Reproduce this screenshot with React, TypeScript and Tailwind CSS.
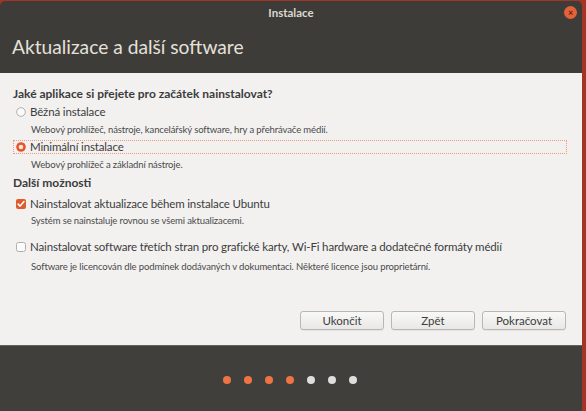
import React from "react";

const font = { fontFamily: 'Lato, "Open Sans", sans-serif' };

function Radio({ checked }: { checked?: boolean }) {
  return (
    <svg width="10" height="10" viewBox="0 0 10 10" className="shrink-0">
      {checked ? (
        <>
          <circle cx="5" cy="5" r="4.8" fill="#e2582b" />
          <circle cx="5" cy="5" r="2.3" fill="#fbe3da" />
        </>
      ) : (
        <circle cx="5" cy="5" r="4.3" fill="#fbfbfb" stroke="#a9a7a3" strokeWidth="0.9" />
      )}
    </svg>
  );
}

function Check({ checked }: { checked?: boolean }) {
  return (
    <svg width="10" height="10" viewBox="0 0 10 10" className="shrink-0">
      {checked ? (
        <>
          <rect x="0" y="0" width="10" height="10" rx="2" fill="#df5a2c" />
          <path d="M2.1 5.1 L4.1 7.1 L8 2.6" fill="none" stroke="#ffffff" strokeWidth="1.5" strokeLinecap="round" strokeLinejoin="round" />
        </>
      ) : (
        <rect x="0.5" y="0.5" width="9" height="9" rx="2" fill="#fbfbfb" stroke="#a9a7a3" strokeWidth="0.9" />
      )}
    </svg>
  );
}

function Button({ label }: { label: string }) {
  return (
    <div className="w-[84px] h-[19px] flex items-center justify-center rounded-[3px] border border-[#b9b7b3] bg-gradient-to-b from-[#f8f8f7] to-[#e9e8e6] text-[11.5px] text-[#3c3c3c] shadow-[0_1px_0_rgba(0,0,0,0.05)]">
      {label}
    </div>
  );
}

const row = "flex items-center gap-[4px] pl-[3px] text-[11.5px] tracking-[-0.15px]";
const desc = "h-[14px] flex items-center pl-[18px] text-[9.5px] tracking-[-0.12px] text-[#4a4a4a]";

export default function App() {
  return (
    <div className="w-[586px] h-[411px] overflow-hidden bg-[#a33426] pt-[1px] pr-[4px]" style={font}>
      <div className="w-[582px] h-[410px] flex flex-col rounded-t-[5px] overflow-hidden">
        {/* title + header */}
        <div className="h-[72px] bg-[#3e3c38] flex flex-col">
          <div className="h-[23px] relative flex items-center justify-center">
            <span className="text-[11.5px] font-bold text-[#dcd8cf]">Instalace</span>
            <div className="absolute right-[5px] top-[5px] w-[13px] h-[13px] rounded-full bg-[#e4623a] flex items-center justify-center text-[9px] leading-none text-[#5a2414] font-bold">
              ×
            </div>
          </div>
          <div className="flex-1 flex items-center pl-[12px] pb-[3px]">
            <span className="text-[19.2px] text-[#e4e1da]">Aktualizace a další software</span>
          </div>
        </div>
        {/* content */}
        <div className="h-[272px] bg-[#f2f1f0] flex flex-col px-[13px] pt-[13px] pb-[15px] text-[#3c3c3c] whitespace-nowrap">
          <div className="h-[16px] flex items-center text-[12px] font-bold">
            Jaké aplikace si přejete pro začátek nainstalovat?
          </div>
          <div className={`h-[16px] mt-[2px] ${row}`}>
            <Radio />
            <span>Běžná instalace</span>
          </div>
          <div className={`mt-[3px] ${desc}`}>
            Webový prohlížeč, nástroje, kancelářský software, hry a přehrávače médií.
          </div>
          <div className={`h-[14px] mt-[3px] w-[554px] border border-dotted border-[#f09a7a] ${row} !pl-[2px]`}>
            <Radio checked />
            <span>Minimální instalace</span>
          </div>
          <div className={`mt-[4px] ${desc}`}>
            Webový prohlížeč a základní nástroje.
          </div>
          <div className="h-[16px] mt-[3px] flex items-center text-[12px] font-bold">
            Další možnosti
          </div>
          <div className={`h-[16px] mt-[5px] ${row}`}>
            <Check checked />
            <span>Nainstalovat aktualizace během instalace Ubuntu</span>
          </div>
          <div className={`mt-[2px] ${desc}`}>
            Systém se nainstaluje rovnou se všemi aktualizacemi.
          </div>
          <div className={`h-[16px] mt-[11px] ${row}`}>
            <Check />
            <span>Nainstalovat software třetích stran pro grafické karty, Wi-Fi hardware a dodatečné formáty médií</span>
          </div>
          <div className={`mt-[5px] ${desc}`}>
            Software je licencován dle podmínek dodávaných v dokumentaci. Některé licence jsou proprietární.
          </div>
          <div className="mt-auto flex justify-end gap-[7px] pr-[3px]">
            <Button label="Ukončit" />
            <Button label="Zpět" />
            <Button label="Pokračovat" />
          </div>
        </div>
        {/* bottom */}
        <div className="flex-1 bg-[#413f3b] border-t border-[#65635f] flex justify-center pt-[30px] pr-[3px]">
          <div className="flex gap-[13px] h-[8px]">
            {[0, 1, 2, 3].map((i) => (
              <div key={i} className="w-[8px] h-[8px] rounded-full bg-[#ee7444]" />
            ))}
            {[0, 1, 2].map((i) => (
              <div key={i} className="w-[8px] h-[8px] rounded-full bg-[#dedede]" />
            ))}
          </div>
        </div>
      </div>
    </div>
  );
}
